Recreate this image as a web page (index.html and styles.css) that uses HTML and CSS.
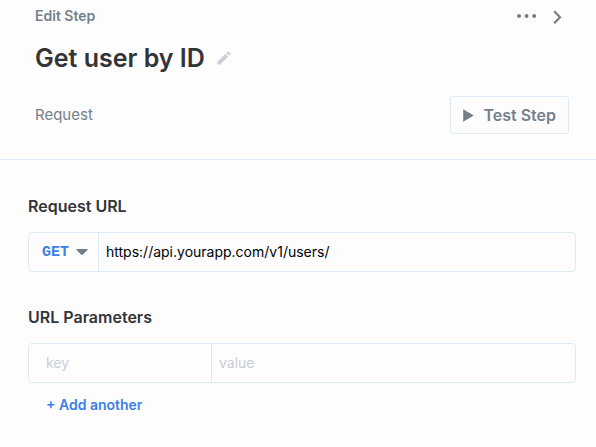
FILE: index.html
```html
<!DOCTYPE html>
<html lang="en">
<head>
<meta charset="utf-8">
<meta name="viewport" content="width=device-width, initial-scale=1">
<title>Edit Step</title>
<link rel="stylesheet" href="styles.css">
</head>
<body>
<header class="step-header">
  <div class="row">
    <span class="eyebrow">Edit Step</span>
    <div class="actions">
      <button class="icon-button" type="button" aria-label="More options">
        <svg width="20" height="20" viewBox="0 0 20 20" fill="currentColor"><circle cx="2" cy="10" r="2"/><circle cx="9.6" cy="10" r="2"/><circle cx="17.2" cy="10" r="2"/></svg>
      </button>
      <button class="icon-button" type="button" aria-label="Collapse">
        <svg width="10" height="20" viewBox="0 0 10 20" fill="none" stroke="currentColor" stroke-width="2.2"><path d="M1.2 5.2 7 11.2l-5.8 6"/></svg>
      </button>
    </div>
  </div>
  <div class="title-row">
    <h1>Get user by ID</h1>
    <button class="icon-button edit" type="button" aria-label="Rename step">
      <svg width="14" height="14" viewBox="0 0 14 14" fill="currentColor"><path d="M.5 10.7 8.4 2.8l2.8 2.8-7.9 7.9H.5zM9.2 2 10.4.8q.8-.7 1.5 0l1.3 1.3q.7.7 0 1.5L12 4.8z"/></svg>
    </button>
  </div>
  <div class="row">
    <span class="kind">Request</span>
    <button class="test-button" type="button">
      <svg width="11" height="13" viewBox="0 0 11 13" fill="currentColor"><path d="M.2.3 10.8 6.5.2 12.7z"/></svg>
      Test Step
    </button>
  </div>
</header>
<main class="step-form">
  <section>
    <h2><label for="url">Request URL</label></h2>
    <div class="field-group">
      <div class="method">
        <select aria-label="Method"><option>GET</option><option>POST</option><option>PUT</option><option>DELETE</option></select>
        <svg class="caret" width="12" height="6" viewBox="0 0 12 6" fill="currentColor"><path d="M.8 0h10.4q1 .2.3 1L7 5.5q-1 .8-2 0L.5 1q-.7-.8.3-1z"/></svg>
      </div>
      <input class="url" id="url" type="text" value="https://api.yourapp.com/v1/users/">
    </div>
  </section>
  <section>
    <h2>URL Parameters</h2>
    <div class="field-group">
      <input class="key" type="text" placeholder="key" aria-label="Parameter key">
      <input class="value" type="text" placeholder="value" aria-label="Parameter value">
    </div>
    <button class="add" type="button">+ Add another</button>
  </section>
</main>
</body>
</html>
```
FILE: styles.css
```css
* {
  box-sizing: border-box;
}

body {
  margin: 0;
  background: #fdfdfe;
  color: #333436;
  font-family: Inter, "Liberation Sans", sans-serif;
  font-size: 14px;
  line-height: 20px;
}

button,
input,
select {
  margin: 0;
  border: 0;
  background: none;
  font: inherit;
  color: inherit;
}

svg {
  display: block;
  flex: none;
}

h1,
h2 {
  margin: 0;
  font-weight: 600;
}

h1 {
  font-size: 25px;
  line-height: 32px;
}

h2 {
  font-size: 16px;
  line-height: 24px;
}

.step-header {
  display: flex;
  flex-direction: column;
  padding: 6px 27px 25px 35px;
  border-bottom: 1px solid #dfeaf7;
  color: #757f8b;
}

.row {
  display: flex;
  align-items: center;
  justify-content: space-between;
}

.eyebrow {
  font-size: 14px;
  font-weight: 600;
}

.actions {
  display: flex;
  gap: 16px;
  padding-right: 6px;
}

.icon-button {
  padding: 0;
}

.title-row {
  display: flex;
  align-items: center;
  gap: 12px;
  padding: 16px 0 22px;
}

.title-row h1 {
  color: #333436;
}

.edit {
  color: #cbd0d6;
}

.kind {
  font-size: 15px;
}

.test-button {
  display: flex;
  align-items: center;
  gap: 9px;
  height: 38px;
  padding: 0 12px;
  border: 1px solid #dfeaf7;
  border-radius: 3px;
  font-size: 16px;
  font-weight: 600;
}

.step-form {
  display: grid;
  gap: 33px;
  padding: 34px 20px 30px 28px;
}

.field-group {
  display: flex;
  height: 40px;
  margin-top: 14px;
  border: 1px solid #dfeaf7;
  border-radius: 4px;
}

.method {
  display: grid;
  flex: none;
  width: 70px;
  align-items: center;
  border-right: 1px solid #dfeaf7;
}

.method select,
.caret {
  grid-area: 1 / 1;
}

.method select {
  width: 100%;
  height: 100%;
  padding: 2px 0 0 13px;
  appearance: none;
  color: #3b7fe8;
  font-family: "Liberation Mono", monospace;
  font-size: 15px;
  font-weight: 700;
}

.caret {
  justify-self: end;
  margin-right: 10px;
  color: #757f8b;
  pointer-events: none;
}

.field-group input {
  min-width: 0;
  padding: 0 7px;
}

.url,
.value {
  flex: 1;
}

.url {
  color: #000;
}

.field-group .key {
  flex: none;
  width: 183px;
  padding-left: 17px;
  border-right: 1px solid #dfeaf7;
}

::placeholder {
  color: #c9cdd3;
  opacity: 1;
}

.add {
  margin-top: 12px;
  padding: 0 18px;
  color: #3b7fe8;
  font-weight: 600;
}
```
